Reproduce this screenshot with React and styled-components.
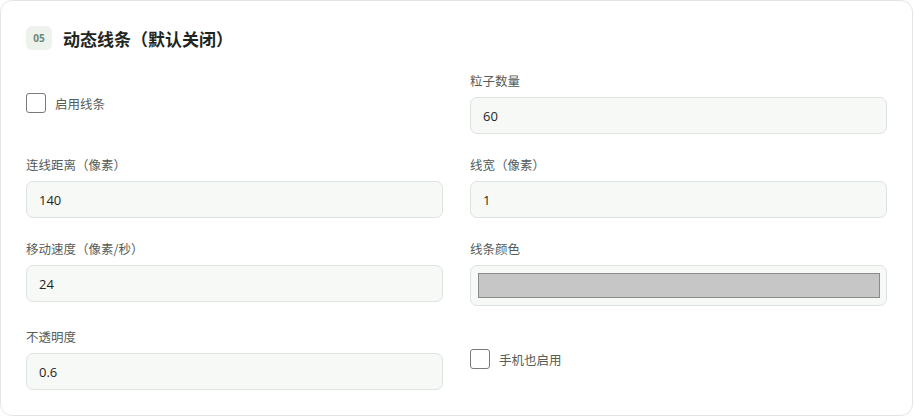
import React from "react";
import styled, { createGlobalStyle } from "styled-components";

const GlobalStyle = createGlobalStyle`
  html, body {
    margin: 0;
    padding: 0;
    background: #ffffff;
  }
  body {
    font-family: "Open Sans", "Noto Sans CJK SC", sans-serif;
  }
  * {
    box-sizing: border-box;
  }
`;

const fields = [
  { type: "check", label: "启用线条" },
  { type: "input", label: "粒子数量", value: "60" },
  { type: "input", label: "连线距离（像素）", value: "140" },
  { type: "input", label: "线宽（像素）", value: "1" },
  { type: "input", label: "移动速度（像素/秒）", value: "24" },
  { type: "color", label: "线条颜色", value: "#c6c6c6" },
  { type: "input", label: "不透明度", value: "0.6" },
  { type: "check", label: "手机也启用" },
];

const App = () => {
  return (
    <>
      <GlobalStyle />
      <Card>
        <Header>
          <Badge>05</Badge>
          <Title>动态线条（默认关闭）</Title>
        </Header>
        <Grid>
          {fields.map((f) =>
            f.type === "check" ? (
              <CheckField key={f.label}>
                <Box />
                <CheckLabel>{f.label}</CheckLabel>
              </CheckField>
            ) : (
              <Field key={f.label}>
                <Label>{f.label}</Label>
                {f.type === "color" ? (
                  <ColorWell>
                    <Swatch $color={f.value} />
                  </ColorWell>
                ) : (
                  <Input>{f.value}</Input>
                )}
              </Field>
            )
          )}
        </Grid>
      </Card>
    </>
  );
};

const Card = styled.div`
  width: 913px;
  height: 416px;
  background: #ffffff;
  border: 1px solid #e2e6e3;
  border-radius: 12px;
  padding: 25px 25px 25px 25px;
`;

const Header = styled.div`
  display: flex;
  align-items: center;
  gap: 11px;
  height: 24px;
`;

const Badge = styled.div`
  width: 26px;
  height: 24px;
  border-radius: 6px;
  background: #edf2ed;
  color: #6b8874;
  font-size: 10px;
  font-weight: 700;
  display: flex;
  align-items: center;
  justify-content: center;
`;

const Title = styled.h3`
  margin: 0;
  font-size: 17px;
  font-weight: 700;
  color: #1f2622;
  font-family: "Noto Sans CJK SC", sans-serif;
`;

const Grid = styled.div`
  margin-top: 22px;
  display: grid;
  grid-template-columns: 1fr 1fr;
  column-gap: 27px;
  row-gap: 22px;
`;

const Field = styled.div`
  display: flex;
  flex-direction: column;
`;

const Label = styled.div`
  font-size: 12.5px;
  line-height: 17px;
  color: #555b57;
  margin-bottom: 8px;
  font-family: "Noto Sans CJK SC", sans-serif;
`;

const Input = styled.div`
  height: 37px;
  border: 1px solid #dde3de;
  border-radius: 7px;
  background: #f7f9f7;
  padding: 0 12px;
  display: flex;
  align-items: center;
  font-size: 13px;
  color: #1f2622;
`;

const ColorWell = styled.div`
  height: 41px;
  border: 1px solid #dde3de;
  border-radius: 7px;
  background: #f7f9f7;
  padding: 7px 6px 7px 7px;
  display: flex;
`;

const Swatch = styled.div`
  flex: 1;
  background: ${(p) => p.$color};
  border: 1px solid #8a8a8a;
`;

const CheckField = styled.label`
  align-self: center;
  display: flex;
  align-items: center;
  gap: 9px;
`;

const Box = styled.span`
  width: 20px;
  height: 20px;
  border: 1.5px solid #7a7a7a;
  border-radius: 3px;
  background: #fff;
`;

const CheckLabel = styled.span`
  font-size: 12.5px;
  color: #555b57;
  font-family: "Noto Sans CJK SC", sans-serif;
`;

export default App;
